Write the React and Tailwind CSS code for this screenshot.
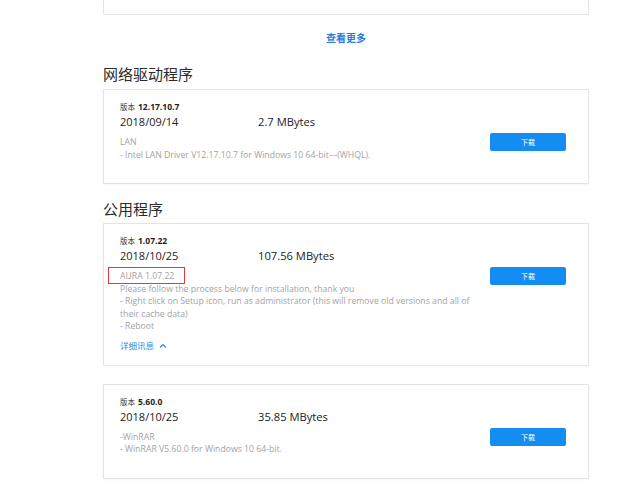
import React from 'react';

const cards = {
  lan: {
    version: '12.17.10.7',
    date: '2018/09/14',
    size: '2.7 MBytes',
    lines: ['LAN', '- Intel LAN Driver V12.17.10.7 for Windows 10 64-bit---(WHQL).'],
  },
  aura: {
    version: '1.07.22',
    date: '2018/10/25',
    size: '107.56 MBytes',
    lines: [
      'AURA 1.07.22',
      'Please follow the process below for installation, thank you',
      '- Right click on Setup icon, run as administrator (this will remove old versions and all of',
      'their cache data)',
      '- Reboot',
    ],
    marked: true,
    details: true,
  },
  winrar: {
    version: '5.60.0',
    date: '2018/10/25',
    size: '35.85 MBytes',
    lines: ['-WinRAR', '- WinRAR V5.60.0 for Windows 10 64-bit.'],
  },
};

const ChevronUp = () => (
  <svg width="8" height="6" viewBox="0 0 8 6" className="ml-[5px]">
    <path d="M1 4.5 L4 1.5 L7 4.5" fill="none" stroke="#2a8be0" strokeWidth="1.2" />
  </svg>
);

const DriverCard = ({ item }) => (
  <div
    className={`border border-[#e4e4e4] shadow-[0_1px_2px_rgba(0,0,0,0.04)] pl-[16px] pr-[22px] pt-[11px] ${
      item.details ? 'pb-[12px]' : 'pb-[22px]'
    }`}
  >
    <div className="h-[12px] flex items-center leading-[12px]">
      <span className="text-[7.5px] text-[#333] font-['Noto_Sans_CJK_SC',sans-serif]">版本</span>
      <span className="ml-[3px] text-[8.5px] font-bold text-[#222]">{item.version}</span>
    </div>
    <div className="mt-[1px] flex h-[16px] items-center text-[11px] text-[#222] leading-[16px]">
      <span className="w-[138px]">{item.date}</span>
      <span className="text-[11.2px]">{item.size}</span>
    </div>
    <div className="mt-[6px] flex">
      <div className="flex-1 text-[8.7px] leading-[12.5px] text-[#a3a3a3]">
        {item.lines.map((line, i) => (
          <div key={i}>
            {i === 0 && item.marked ? (
              <span className="relative">
                {line}
                <span className="absolute -left-[12px] -right-[11px] -top-[3px] -bottom-[2px] border-[1.5px] border-[#e0393e]" />
              </span>
            ) : (
              line
            )}
          </div>
        ))}
        {item.details && (
          <div className="mt-[6px] flex items-center h-[14px] text-[8.5px] text-[#2a8be0] font-['Noto_Sans_CJK_SC',sans-serif]">
            详细讯息
            <ChevronUp />
          </div>
        )}
      </div>
      <button className="-mt-[3px] h-[18px] w-[76px] shrink-0 rounded-[2px] bg-[#148df2] text-[7px] text-white font-['Noto_Sans_CJK_SC',sans-serif] leading-[18px]">
        下载
      </button>
    </div>
  </div>
);

const Heading = ({ children, className }) => (
  <h2
    className={`text-[15px] leading-[20px] text-[#2b2b2b] font-['Noto_Sans_CJK_SC',sans-serif] font-normal ${className}`}
  >
    {children}
  </h2>
);

export default function App() {
  return (
    <div className="min-h-[485px] w-[640px] bg-white font-['Open_Sans','Noto_Sans_CJK_SC',sans-serif]">
      <div className="ml-[103px] w-[486px]">
        <div className="h-[15px] border border-t-0 border-[#e4e4e4]" />
        <div className="mt-[16px] text-center text-[10px] font-bold leading-[14px] text-[#2680d9] font-['Noto_Sans_CJK_SC',sans-serif]">
          查看更多
        </div>
        <Heading className="mt-[19px] mb-[5px]">网络驱动程序</Heading>
        <DriverCard item={cards.lan} />
        <Heading className="mt-[15px] mb-[4px]">公用程序</Heading>
        <DriverCard item={cards.aura} />
        <div className="h-[18px]" />
        <DriverCard item={cards.winrar} />
      </div>
    </div>
  );
}
